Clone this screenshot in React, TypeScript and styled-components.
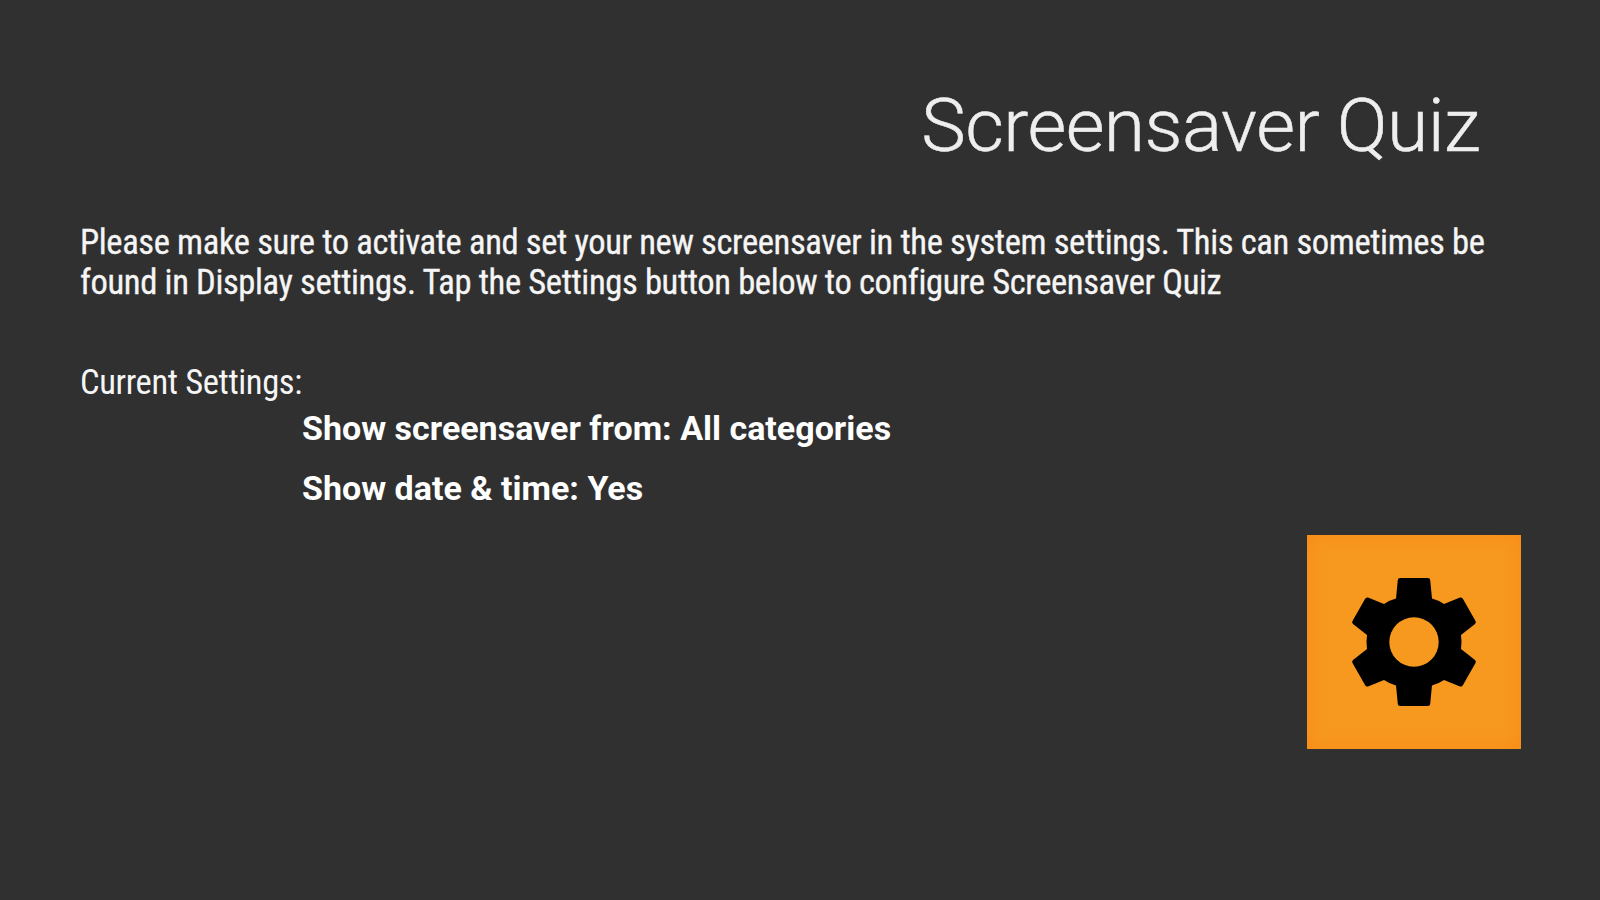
import React from 'react'
import styled, { createGlobalStyle } from 'styled-components'

const GlobalStyle = createGlobalStyle`
  body {
    margin: 0;
    background: #303030;
  }
`

const Screen = styled.main`
  box-sizing: border-box;
  width: 1600px;
  height: 900px;
  padding: 81px 79px 0 80px;
  display: flex;
  flex-direction: column;
  overflow: hidden;
  background: #303030;
  color: #f5f5f5;
  font-family: Roboto, sans-serif;
`

const Title = styled.h1`
  margin: 0 41px 0 0;
  align-self: flex-end;
  color: #eee;
  font-size: 75px;
  line-height: 88px;
  font-weight: 300;
  letter-spacing: -0.55px;
  -webkit-text-stroke: 0.5px #eee;
  white-space: nowrap;
`

const Intro = styled.p`
  margin: 53px 0 0;
  font-family: 'Roboto Condensed', Roboto, sans-serif;
  font-size: 34.6px;
  line-height: 40px;
  font-stretch: 75%;
  letter-spacing: -0.38px;
  -webkit-text-stroke: 0.3px #f5f5f5;
  white-space: nowrap;
`

const SettingsLabel = styled.h2`
  margin: 60px 0 0;
  font-family: 'Roboto Condensed', Roboto, sans-serif;
  font-size: 34.6px;
  line-height: 40px;
  font-weight: 400;
  font-stretch: 75%;
  letter-spacing: -0.38px;
`

const SettingsList = styled.ul`
  margin: -4px 0 0;
  padding: 0 0 0 222px;
  list-style: none;
`

const Setting = styled.li`
  color: #fff;
  font-size: 34px;
  line-height: 60px;
  font-weight: 700;
`

const SettingsButton = styled.button`
  align-self: flex-end;
  display: flex;
  align-items: center;
  justify-content: center;
  width: 214px;
  height: 214px;
  margin: 17px 0 0;
  padding: 0;
  border: 0;
  background: #f7991f;
  box-shadow: inset 0 0 22px #f88a16;
  cursor: pointer;
`

const GearIcon = styled.svg`
  display: block;
  width: 128px;
  height: 128px;
  fill: #000;
`

const App: React.FC = () => {
  return (
    <>
      <GlobalStyle />
      <Screen>
        <Title>Screensaver Quiz</Title>
        <Intro>
          Please make sure to activate and set your new screensaver in the system settings. This can sometimes be
          <br />
          found in Display settings. Tap the Settings button below to configure Screensaver Quiz
        </Intro>
        <SettingsLabel>Current Settings:</SettingsLabel>
        <SettingsList>
          <Setting>Show screensaver from: All categories</Setting>
          <Setting>{'Show date & time: Yes'}</Setting>
        </SettingsList>
        <SettingsButton aria-label="Settings">
          <GearIcon viewBox="-64 -64 128 128">
            <path
              fillRule="evenodd"
              d="M-14-64H14Q16-64 16.2-62L18-43.5Q24-42 30-38L46-44.5Q48-45 49-43L61.5-21Q62.5-19.5 61-18L47-7Q48 0 47 7L61 18Q62.5 19.5 61.5 21L49 43Q48 45 46 44.5L30 38Q24 42 18 43.5L16.2 62Q16 64 14 64H-14Q-16 64-16.2 62L-18 43.5Q-24 42-30 38L-46 44.5Q-48 45-49 43L-61.5 21Q-62.5 19.5-61 18L-47 7Q-48 0-47-7L-61-18Q-62.5-19.5-61.5-21L-49-43Q-48-45-46-44.5L-30-38Q-24-42-18-43.5L-16.2-62Q-16-64-14-64Z M24.7 0A24.7 24.7 0 1 0-24.7 0A24.7 24.7 0 1 0 24.7 0Z"
            />
          </GearIcon>
        </SettingsButton>
      </Screen>
    </>
  )
}

export default App
